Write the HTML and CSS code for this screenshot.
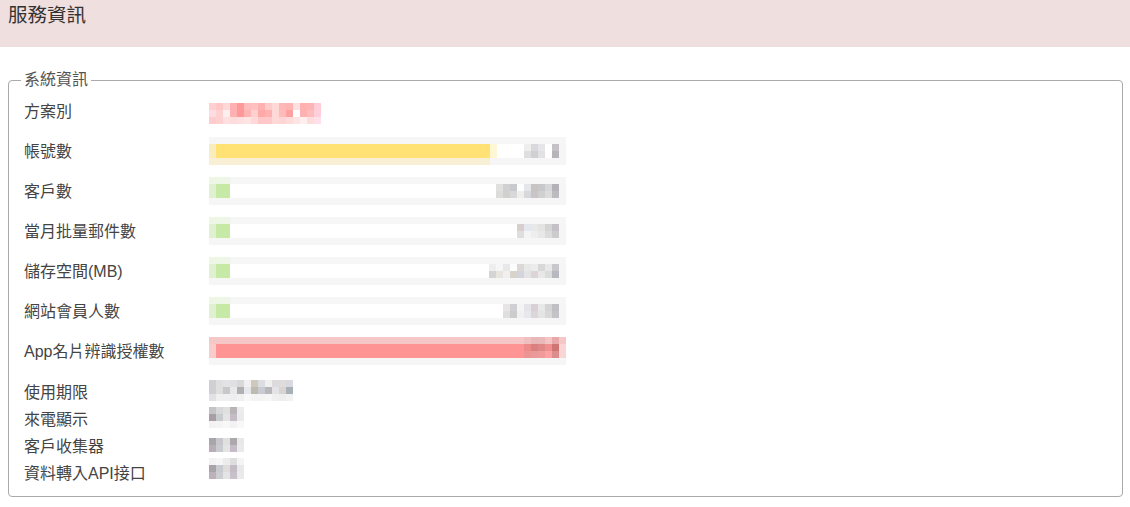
FILE: index.html
```html
<!DOCTYPE HTML>
<html>
<head>
    <title>服務資訊</title>
    <meta charset="utf-8">
    <link rel="stylesheet" href="styles.css">
</head>
<body>
<!--標題-->
<div class="header">
    <h1>服務資訊</h1>
</div>

<!--系統資訊-->
<fieldset class="info">
    <legend>系統資訊</legend>
    <div class="row">
        <div class="label">方案別</div>
        <div class="mosaic plan" data-key="plan"></div>
    </div>
    <div class="row">
        <div class="label">帳號數</div>
        <div class="bar">
            <div class="track"><div class="fill yellow" style="width:281px"></div></div>
            <div class="mosaic num" data-key="n1"></div>
        </div>
    </div>
    <div class="row">
        <div class="label">客戶數</div>
        <div class="bar">
            <div class="track"><div class="fill green" style="width:21px"></div></div>
            <div class="mosaic num" data-key="n2"></div>
        </div>
    </div>
    <div class="row">
        <div class="label">當月批量郵件數</div>
        <div class="bar">
            <div class="track"><div class="fill green" style="width:21px"></div></div>
            <div class="mosaic num" data-key="n3"></div>
        </div>
    </div>
    <div class="row">
        <div class="label">儲存空間(MB)</div>
        <div class="bar">
            <div class="track"><div class="fill green" style="width:21px"></div></div>
            <div class="mosaic num" data-key="n4"></div>
        </div>
    </div>
    <div class="row">
        <div class="label">網站會員人數</div>
        <div class="bar">
            <div class="track"><div class="fill green" style="width:21px"></div></div>
            <div class="mosaic num" data-key="n5"></div>
        </div>
    </div>
    <div class="row">
        <div class="label">App名片辨識授權數</div>
        <div class="bar app">
            <div class="track"><div class="fill red" style="width:100%"></div></div>
            <div class="mosaic num top" data-key="n6"></div>
        </div>
    </div>

    <div class="short">
        <div class="row">
            <div class="label">使用期限</div>
            <div class="mosaic" data-key="s1"></div>
        </div>
        <div class="row">
            <div class="label">來電顯示</div>
            <div class="mosaic" data-key="s2"></div>
        </div>
        <div class="row">
            <div class="label">客戶收集器</div>
            <div class="mosaic" data-key="s3"></div>
        </div>
        <div class="row">
            <div class="label">資料轉入API接口</div>
            <div class="mosaic" data-key="s4"></div>
        </div>
    </div>
</fieldset>

<!--馬賽克遮罩-->
<script type="text/javascript">
    var data = {
        plan : [
            'ffd0d0 ffc8c8 ffd8d8 ffb0b0 ff9a9a ffbcbc ffc0c0 ffb0b0 ffcaca ffd8d8 ffb8b8 ffb4b4 ffe0e0 ffb0b0 ffb4b4 ffcdd8',
            'ffdce4 ffd0d0 ffeeee ffb0b0 ff9898 ffb4b4 ffd0d0 ffa8a8 ffb0b0 ffd8d8 ffbaba ffa0a0 ffffff ffb0b0 ffbcbc ffd0dc',
            'ffcccc ffd0d0 ffe0e0 ffdcdc ffe0e0 ffe4e4 ffd8d8 ffc8c8 ffc8c8 ffd8d8 ffd4d4 ffdcdc ffe4e4 fff0f0 ffdcdc ffe0e8'
        ],
        n1 : [
            'f0eeec d8d8de e6e6e8 ffffff c4c2c6',
            'e0dfdf cfd0d4 e2e2e4 ffffff b6b4b8'
        ],
        n2 : [
            'e0e0de d0d0d2 c8c9cc fdfdfd e4e6ea c8c4c4 c8c8cc d4d8d8 b4b2b8',
            'dcdcda d0d0d0 d8d8d8 f0eeea d8d8dc c8c4c8 d0d0d0 dcdcdc bcbcc0'
        ],
        n3 : [
            'd8cfcc e4e8ee e8e8e8 e4e4e4 d4d4d4 c4c0c8',
            'dedede f4f4f4 eeeeee e8e8e8 dcdcdc cccccc'
        ],
        n4 : [
            'eeeeee f6f6f6 e8e8e8 fcfcfc dcd8d8 e8e8e8 ececec d8d8d8 e8e8ea c8c8cc',
            'd4d4d4 e8e4e0 f0f0f0 d8d4cc d4d4dc e4e4e4 dcd4d8 e8e8e8 dcdcdc b8b8c0'
        ],
        n5 : [
            'e8e6e4 d0d0d4 f4f4f4 e4e4ea d8d0d4 e8e8e8 d4d4d4 c0c0c4',
            'e0dedc cccccc f0f0f0 e8e8ec dcd6d8 e4e4e4 d8d8d8 c4c4c8'
        ],
        n6 : [
            'f0c0c0 e8b8b8 eab8b8 f5c5c5 e6a8a8',
            'ee8a8a d98080 e08888 f08f8f d07474',
            'ea9494 e89a9a f09a9a fca2a2 dc8e8e'
        ],
        s1 : [
            'd0d0d4 e0dfe0 e3e3e6 dfe0e4 d8d8d8 f0f0f0 cfc8bd dcdde0 f0f0f0 dcdcdc e0dcdc d9dadf',
            'd0d0d4 e0dfe0 c8c8cc e8e8ea b0afb4 e6e8ec bdbab0 c8ccd2 b8b8bc e4e4e6 d8d4d4 aab0b8',
            'e2e2e6 f0f0f0 f0f0f0 eeeef0 f0f0ee f8f8f8 f4f4f4 f4f4f4 f6f6f6 f0f0f0 eeeeee f2f2f2'
        ],
        s2 : [
            'c4c4c8 d8d8da e0e0de b8b4b8 ececee',
            'a89fa6 c8cccf e4e4e4 c6bcc6 e8eaec',
            'f2f2f2 f4f4f4 f8f8f8 f2f2f2 f8f8f8'
        ],
        s3 : [
            'a8a6aa c8c8cc e0e0de ada8ae e8e8ea',
            'b9aeb8 c8ccd0 e4e4e4 c6bcc8 e8eaec'
        ],
        s4 : [
            'f2f2f2 f6f6f6 ececec dedede f4f4f6',
            'a8a4a8 c8ccd0 e0dcdc c4bcc4 e6e8ea',
            'bcb0bb ccced2 e4e4e4 c8c0ca e8eaec',
            'ffffff ffffff ffffff ffffff ffffff'
        ]
    };
    var oMosaic = document.querySelectorAll('.mosaic');
    for ( var i=0;i<oMosaic.length;i++ )
    {
        var rows = data[ oMosaic[i].getAttribute('data-key') ];
        var cols = rows[0].split(' ').length;
        oMosaic[i].style.gridTemplateColumns = 'repeat('+ cols +',7px)';
        for ( var r=0;r<rows.length;r++ )
        {
            var cells = rows[r].split(' ');
            for ( var c=0;c<cells.length;c++ )
            {
                var oCell = document.createElement('span');
                oCell.style.background = '#' + cells[c];
                oMosaic[i].appendChild( oCell );
            }
        }
    }
</script>
</body>
</html>
```

FILE: styles.css
```css
*{ margin:0; padding:0;}
body{
    background:#fff;
    color:#444;
    font-family:"Liberation Sans","Noto Sans CJK TC",sans-serif;
}
.header{
    height:47px;
    padding:4px 8px 0;
    box-sizing:border-box;
    background:#f0dfdf;
}
.header h1{
    font-size:19.5px;
    line-height:22px;
    font-weight:normal;
    color:#333;
}
.info{
    margin:23px 7px 0 8px;
    padding:0 12px 11px;
    border:1px solid #aaa;
    border-radius:4px;
}
.info legend{
    padding:0 3px;
    font-size:16px;
    line-height:20px;
    color:#555;
}
.row{
    display:flex;
    align-items:center;
    height:40px;
    font-size:16px;
}
.row .label{
    width:188px;
    padding-left:3px;
    box-sizing:border-box;
    flex-shrink:0;
}
.short{
    margin-top:7px;
}
.short .row{
    height:27px;
}
.mosaic{
    display:grid;
    grid-auto-rows:7px;
}
.plan{
    margin-top:6px;
}
.bar{
    position:relative;
    width:357px;
    height:28px;
    padding:7px 0;
    box-sizing:border-box;
    margin-top:1px;
    background:#f6f6f6;
}
.bar.app{
    background:linear-gradient(#f6c7c7 7px,#f9d6d6 7px,#f9d6d6 21px,#f6f6f6 21px);
}
.track{
    height:14px;
    margin-right:7px;
    background:#fff;
}
.fill{
    height:14px;
}
.fill.yellow{
    background:linear-gradient(to right,#f9ecbd 7px,#ffe273 7px);
    box-shadow:0 7px 0 #f8efd5, 7px 0 0 #fff7d4;
}
.fill.green{
    background:linear-gradient(to right,#e0f1d2 7px,#c6e9a6 7px);
    box-shadow:0 -7px 0 #eef7e6;
}
.fill.red{
    background:linear-gradient(to right,#f8cccc 7px,#ff9494 7px);
}
.num{
    position:absolute;
    top:7px;
    right:7px;
}
.num.top{
    top:0;
}
```
